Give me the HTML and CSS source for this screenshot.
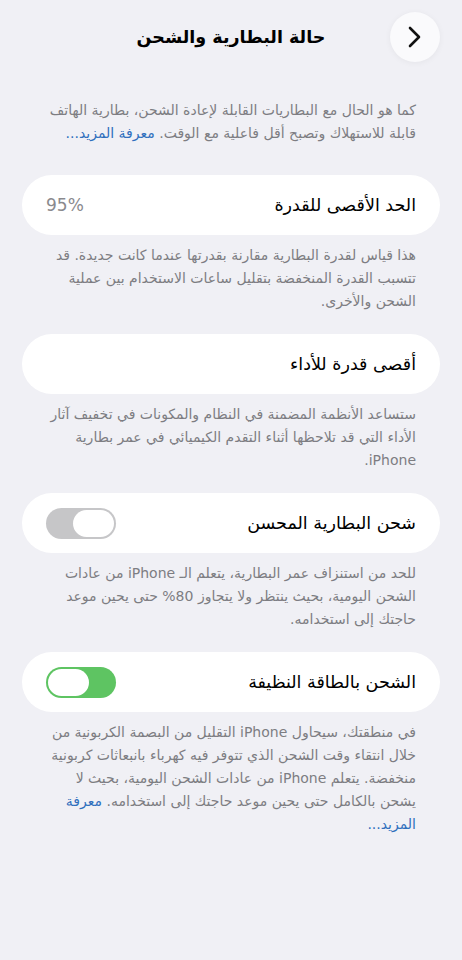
FILE: index.html
```html
<!DOCTYPE html>
<html lang="ar" dir="rtl">
<head>
<meta charset="UTF-8">
<meta name="viewport" content="width=device-width, initial-scale=1.0">
<title>حالة البطارية والشحن</title>
<link rel="stylesheet" href="styles.css">
</head>
<body>
<div class="header">
  <a class="back" href="#">
    <svg width="20" height="24" viewBox="0 0 20 24"><path d="M5 3 L14 12 L5 21" fill="none" stroke="#111" stroke-width="2.6" stroke-linecap="round" stroke-linejoin="round"/></svg>
  </a>
  <h1>حالة البطارية والشحن</h1>
  <span></span>
</div>

<p class="note intro">كما هو الحال مع البطاريات القابلة لإعادة الشحن، بطارية الهاتف قابلة للاستهلاك وتصبح أقل فاعلية مع الوقت. <a href="#">معرفة المزيد...</a></p>

<div class="card">
  <span class="label">الحد الأقصى للقدرة</span>
  <span class="value">95%</span>
</div>
<p class="note">هذا قياس لقدرة البطارية مقارنة بقدرتها عندما كانت جديدة. قد تتسبب القدرة المنخفضة بتقليل ساعات الاستخدام بين عملية الشحن والأخرى.</p>

<div class="card">
  <span class="label">أقصى قدرة للأداء</span>
</div>
<p class="note">ستساعد الأنظمة المضمنة في النظام والمكونات في تخفيف آثار الأداء التي قد تلاحظها أثناء التقدم الكيميائي في عمر بطارية iPhone.</p>

<div class="card">
  <span class="label">شحن البطارية المحسن</span>
  <span class="toggle"><span class="knob"></span></span>
</div>
<p class="note">للحد من استنزاف عمر البطارية، يتعلم الـ iPhone من عادات الشحن اليومية، بحيث ينتظر ولا يتجاوز 80% حتى يحين موعد حاجتك إلى استخدامه.</p>

<div class="card">
  <span class="label">الشحن بالطاقة النظيفة</span>
  <span class="toggle on"><span class="knob"></span></span>
</div>
<p class="note">في منطقتك، سيحاول iPhone التقليل من البصمة الكربونية من خلال انتقاء وقت الشحن الذي تتوفر فيه كهرباء بانبعاثات كربونية منخفضة. يتعلم iPhone من عادات الشحن اليومية، بحيث لا يشحن بالكامل حتى يحين موعد حاجتك إلى استخدامه. <a href="#">معرفة المزيد...</a></p>
</body>
</html>
```

FILE: styles.css
```css
body {
  margin: 0;
  padding: 0;
  background-color: #f0f0f5;
  font-family: "DejaVu Sans", "Noto Sans", sans-serif;
  color: #000;
}

.header {
  display: grid;
  grid-template-columns: 50px 1fr 50px;
  align-items: center;
  padding: 12px 22px 0 22px;
  height: 50px;
}

.header h1 {
  margin: 0;
  font-size: 17.5px;
  font-weight: bold;
  text-align: center;
}

.back {
  width: 50px;
  height: 50px;
  border-radius: 50%;
  background-color: #fafafc;
  box-shadow: 0 1px 6px rgba(0, 0, 0, 0.05);
  display: flex;
  align-items: center;
  justify-content: center;
}

.note {
  margin: 9px 46px 21px 46px;
  font-size: 14px;
  line-height: 23px;
  color: #7d7d82;
}

.note a {
  color: #2f6fbd;
  text-decoration: none;
}

.intro {
  margin-top: 37px;
  margin-bottom: 30px;
}

.card {
  margin: 0 22px;
  height: 60px;
  border-radius: 30px;
  background-color: #fff;
  display: flex;
  align-items: center;
  justify-content: space-between;
  padding: 0 24px;
}

.label {
  font-size: 17.5px;
}

.value {
  font-size: 17px;
  color: #8a8a8e;
}

.toggle {
  width: 70px;
  height: 31px;
  border-radius: 16px;
  background-color: #c6c6c8;
  display: flex;
  align-items: center;
  padding: 0 2px;
  box-sizing: border-box;
}

.toggle .knob {
  width: 41px;
  height: 27px;
  border-radius: 14px;
  background-color: #fff;
}

.toggle.on {
  background-color: #5ec462;
  justify-content: flex-end;
}
```
